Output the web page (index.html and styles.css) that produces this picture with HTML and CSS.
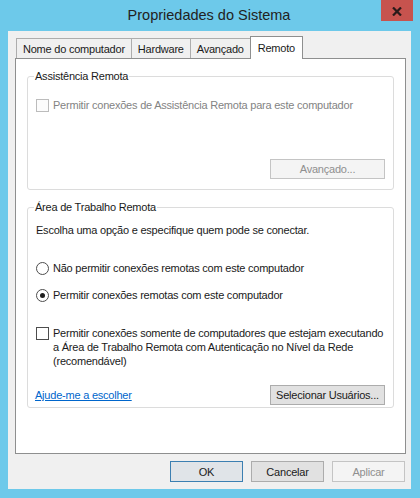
FILE: index.html
```html
<!DOCTYPE html>
<html lang="pt-BR">
<head>
  <meta charset="UTF-8">
  <meta name="viewport" content="width=device-width, initial-scale=1.0">
  <link rel="stylesheet" href="styles.css">
  <title>Propriedades do Sistema</title>
</head>
<body>

  <div class="window">
    <!-- Barra de título -->
    <div class="titlebar">
      <span class="title">Propriedades do Sistema</span>
      <button class="close" aria-label="Fechar">
        <svg width="10" height="9" viewBox="0 0 10 9">
          <path d="M1 0.5 L9 8.5 M9 0.5 L1 8.5" stroke="#2a1a1a" stroke-width="2.2" fill="none"/>
        </svg>
      </button>
    </div>

    <div class="client">
      <!-- Abas -->
      <div class="tabs">
        <div class="tab">Nome do computador</div>
        <div class="tab">Hardware</div>
        <div class="tab">Avançado</div>
        <div class="tab active">Remoto</div>
      </div>

      <div class="panel">
        <!-- Assistência Remota -->
        <fieldset class="group">
          <legend>Assistência Remota</legend>
          <div class="option disabled first">
            <span class="check"></span>
            <span>Permitir conexões de Assistência Remota para este computador</span>
          </div>
          <div class="group-actions spaced">
            <button class="btn wide" disabled>Avançado...</button>
          </div>
        </fieldset>

        <!-- Área de Trabalho Remota -->
        <fieldset class="group tight">
          <legend>Área de Trabalho Remota</legend>
          <p class="intro">Escolha uma opção e especifique quem pode se conectar.</p>
          <div class="option radio-first">
            <span class="radio"></span>
            <span>Não permitir conexões remotas com este computador</span>
          </div>
          <div class="option radio-next">
            <span class="radio checked"></span>
            <span>Permitir conexões remotas com este computador</span>
          </div>
          <div class="option multi">
            <span class="check"></span>
            <span class="multi-text">Permitir conexões somente de computadores que estejam executando<br>a Área de Trabalho Remota com Autenticação no Nível da Rede<br>(recomendável)</span>
          </div>
          <div class="group-actions between">
            <a href="#" class="link">Ajude-me a escolher</a>
            <button class="btn wide">Selecionar Usuários...</button>
          </div>
        </fieldset>
      </div>

      <!-- Botões do diálogo -->
      <div class="footer">
        <button class="btn dialog default">OK</button>
        <button class="btn dialog">Cancelar</button>
        <button class="btn dialog" disabled>Aplicar</button>
      </div>
    </div>
  </div>

</body>
</html>
```

FILE: styles.css
```css
body {
  margin: 0;
  background-color: #6dc9ea;
  font-family: 'Liberation Sans', Arial, sans-serif;
  font-size: 11px;
  letter-spacing: -0.22px;
  color: #1a1a1a;
}

.window {
  display: flex;
  flex-direction: column;
  height: 498px;
  box-sizing: border-box;
  padding-bottom: 9px;
}

.titlebar {
  position: relative;
  height: 31px;
  line-height: 31px;
  text-align: center;
  flex-shrink: 0;
}

.title {
  font-size: 14.5px;
  letter-spacing: 0;
  color: #222;
  margin-left: -2px;
}

.close {
  position: absolute;
  top: 0;
  right: 7px;
  width: 32px;
  height: 21px;
  padding: 0;
  border: none;
  background-color: #c7534e;
  display: flex;
  align-items: center;
  justify-content: center;
  padding-top: 1px;
}

.client {
  flex: 1;
  display: flex;
  flex-direction: column;
  margin: 0 9px 0 8px;
  padding: 5px 5px 0 7px;
  background-color: #f0f0f0;
}

/* abas */
.tabs {
  display: flex;
  align-items: flex-end;
  height: 22px;
  margin-left: 1px;
  flex-shrink: 0;
}

.tab {
  height: 20px;
  box-sizing: border-box;
  padding: 1px 6px 0;
  line-height: 18px;
  border: 1px solid #adadad;
  border-bottom: none;
  background-color: #f0f0f0;
  white-space: nowrap;
}

.tab + .tab {
  margin-left: -1px;
}

.tab.active {
  position: relative;
  height: 23px;
  margin-bottom: -1px;
  padding: 1px 7px 0;
  line-height: 20px;
  border-color: #8e8f8f;
  background-color: #fff;
}

.panel {
  flex: 1;
  background-color: #fff;
  border: 1px solid #8e8f8f;
  padding: 10px 11px 0;
}

/* caixas de grupo */
.group {
  margin: 0;
  padding: 0 8px 10px;
  border: 1px solid #dcdcdc;
  border-radius: 3px;
  min-width: 0;
}

.group.tight {
  margin-top: 10px;
  padding-bottom: 2px;
}

.group legend {
  padding: 0 1px;
  margin-left: -2px;
  line-height: 15px;
}

.intro {
  margin: 8px 0 0;
  line-height: 15px;
}

.option {
  display: flex;
  align-items: center;
  gap: 4px;
  line-height: 15px;
}

.option.first {
  margin-top: 14px;
}

.option.radio-first {
  margin-top: 23px;
}

.option.radio-next {
  margin-top: 12px;
}

.option.multi {
  margin-top: 23px;
  align-items: flex-start;
  line-height: 14px;
}

.option.multi .check {
  margin-top: 1px;
}

.multi-text {
  white-space: nowrap;
}

.option.disabled {
  color: #838383;
}

.check {
  flex-shrink: 0;
  width: 13px;
  height: 13px;
  box-sizing: border-box;
  border: 1px solid #4d4d4d;
  background-color: #fff;
}

.option.disabled .check {
  border-color: #bcbcbc;
  background-color: #fcfcfc;
}

.radio {
  flex-shrink: 0;
  width: 13px;
  height: 13px;
  box-sizing: border-box;
  border: 1px solid #4d4d4d;
  border-radius: 50%;
  background-color: #fff;
  display: flex;
  align-items: center;
  justify-content: center;
}

.radio.checked::after {
  content: '';
  width: 5px;
  height: 5px;
  border-radius: 50%;
  background-color: #1e1e1e;
}

.group-actions {
  display: flex;
  justify-content: flex-end;
  align-items: center;
}

.group-actions.spaced {
  margin-top: 46px;
}

.group-actions.between {
  justify-content: space-between;
  margin-top: 17px;
}

.link {
  color: #0066cc;
  text-decoration: underline;
  margin-left: -1px;
}

/* botões */
.btn {
  font-family: inherit;
  font-size: 11px;
  letter-spacing: -0.22px;
  color: #1a1a1a;
  height: 20px;
  padding: 0;
  border: 1px solid #acacac;
  background-color: #e1e1e1;
}

.btn:disabled {
  color: #8f8f8f;
  border-color: #c4c4c4;
  background-color: #f4f4f4;
}

.btn.wide {
  width: 115px;
}

.footer {
  display: flex;
  justify-content: flex-end;
  gap: 8px;
  margin: 7px 1px 7px 0;
  flex-shrink: 0;
}

.btn.dialog {
  width: 73px;
  height: 21px;
}

.btn.default {
  border-color: #3c7fb1;
  background-color: #e0e4e8;
}
```
